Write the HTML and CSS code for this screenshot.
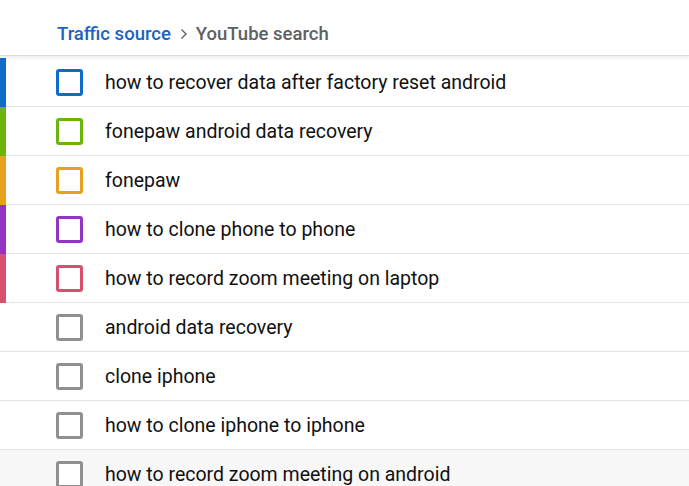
FILE: index.html
```html
<!DOCTYPE html>
<html lang="en">
<head>
    <meta charset="UTF-8">
    <meta name="viewport" content="width=device-width, initial-scale=1.0">
    <title>YouTube search terms</title>
    <link rel="stylesheet" href="styles.css">
</head>
<body>
    <div class="header">
        <a class="crumb-link" href="#">Traffic source</a>
        <svg class="chevron" width="16" height="16" viewBox="0 0 16 16"><path d="M5.5 3.5 L10 8 L5.5 12.5" fill="none" stroke="#606060" stroke-width="1.4"/></svg>
        <span class="crumb-current">YouTube search</span>
    </div>
    <div class="list">
        <div class="row c-blue"><span class="bar"></span><span class="box"></span><span class="label">how to recover data after factory reset android</span></div>
        <div class="row c-green"><span class="bar"></span><span class="box"></span><span class="label">fonepaw android data recovery</span></div>
        <div class="row c-orange"><span class="bar"></span><span class="box"></span><span class="label">fonepaw</span></div>
        <div class="row c-purple"><span class="bar"></span><span class="box"></span><span class="label">how to clone phone to phone</span></div>
        <div class="row c-pink"><span class="bar"></span><span class="box"></span><span class="label">how to record zoom meeting on laptop</span></div>
        <div class="row"><span class="bar"></span><span class="box"></span><span class="label">android data recovery</span></div>
        <div class="row"><span class="bar"></span><span class="box"></span><span class="label">clone iphone</span></div>
        <div class="row"><span class="bar"></span><span class="box"></span><span class="label">how to clone iphone to iphone</span></div>
        <div class="row hover"><span class="bar"></span><span class="box"></span><span class="label">how to record zoom meeting on android</span></div>
    </div>
</body>
</html>
```

FILE: styles.css
```css
body {
    margin: 0;
    font-family: Roboto, "Noto Sans", Arial, sans-serif;
    background: #ffffff;
    overflow: hidden;
}
.header {
    height: 56px;
    display: flex;
    align-items: center;
    padding-left: 57px;
    padding-top: 12px;
    box-sizing: border-box;
    border-bottom: 1px solid #dcdcdc;
    box-shadow: 0 2px 4px rgba(0, 0, 0, 0.08);
    position: relative;
    font-size: 18.5px;
    font-weight: 500;
}
.crumb-link {
    color: #1c62c0;
    text-decoration: none;
}
.chevron {
    margin: 0 4px 0 5px;
}
.crumb-current {
    color: #606060;
}
.list {
    margin-top: 2px;
}
.row {
    display: flex;
    align-items: center;
    height: 49px;
    border-bottom: 1px solid #e3e3e3;
    box-sizing: border-box;
}
.row.hover {
    background: #f7f7f7;
}
.bar {
    width: 6px;
    align-self: stretch;
    margin-bottom: -1px;
}
.box {
    width: 27px;
    height: 27px;
    box-sizing: border-box;
    border: 3px solid #909090;
    border-radius: 3px;
    margin-left: 50px;
    margin-right: 22px;
    background: #fff;
}
.label {
    font-size: 19.5px;
    color: #111111;
}
.c-blue .bar { background: #0f6cc8; }
.c-blue .box { border-color: #0f6cc8; }
.c-green .bar { background: #6cb40a; }
.c-green .box { border-color: #6cb40a; }
.c-orange .bar { background: #e8a021; }
.c-orange .box { border-color: #e8a021; }
.c-purple .bar { background: #9235c2; }
.c-purple .box { border-color: #9235c2; }
.c-pink .bar { background: #d8506f; }
.c-pink .box { border-color: #d8506f; }
```
